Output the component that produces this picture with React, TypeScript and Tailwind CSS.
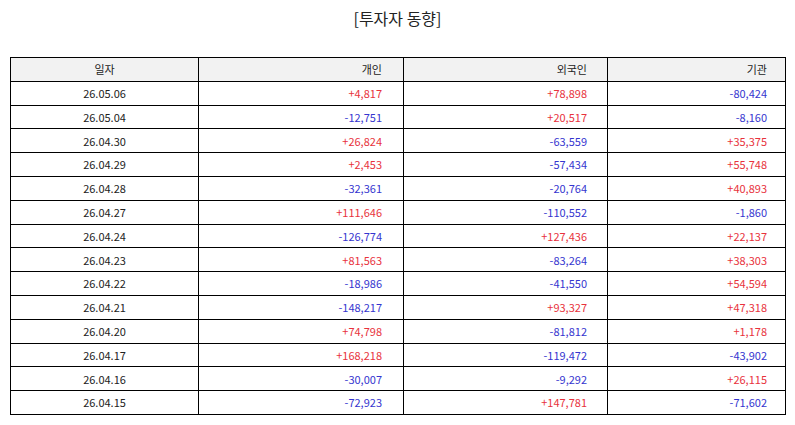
import React from 'react';

type Row = [string, string, string, string];

const rows: Row[] = [
  ['26.05.06', '+4,817', '+78,898', '-80,424'],
  ['26.05.04', '-12,751', '+20,517', '-8,160'],
  ['26.04.30', '+26,824', '-63,559', '+35,375'],
  ['26.04.29', '+2,453', '-57,434', '+55,748'],
  ['26.04.28', '-32,361', '-20,764', '+40,893'],
  ['26.04.27', '+111,646', '-110,552', '-1,860'],
  ['26.04.24', '-126,774', '+127,436', '+22,137'],
  ['26.04.23', '+81,563', '-83,264', '+38,303'],
  ['26.04.22', '-18,986', '-41,550', '+54,594'],
  ['26.04.21', '-148,217', '+93,327', '+47,318'],
  ['26.04.20', '+74,798', '-81,812', '+1,178'],
  ['26.04.17', '+168,218', '-119,472', '-43,902'],
  ['26.04.16', '-30,007', '-9,292', '+26,115'],
  ['26.04.15', '-72,923', '+147,781', '-71,602'],
];

const tone = (v: string) => (v.startsWith('+') ? 'text-[#e8323c]' : 'text-[#3535cf]');

const App: React.FC = () => {
  return (
    <div
      className="w-[795px] h-[425px] bg-white overflow-hidden"
      style={{ fontFamily: '"Noto Sans CJK KR", "Noto Sans", sans-serif' }}
    >
      <h1 className="h-[38px] pt-[5px] text-center text-[16px] leading-[26px] text-[#222]">[투자자 동향]</h1>

      <div className="pt-[19px] pl-[10px]">
        <table className="table-fixed border-collapse w-[775px] text-[11px] text-[#222]">
          <colgroup>
            <col className="w-[188px]" />
            <col className="w-[205px]" />
            <col className="w-[204px]" />
            <col className="w-[178px]" />
          </colgroup>
          <thead>
            <tr className="h-[23.8px] bg-[#f2f2f2]">
              <th className="border border-black font-normal text-center p-0">일자</th>
              <th className="border border-black font-normal text-right p-0 pr-[21px]">개인</th>
              <th className="border border-black font-normal text-right p-0 pr-[20px]">외국인</th>
              <th className="border border-black font-normal text-right p-0 pr-[18px]">기관</th>
            </tr>
          </thead>
          <tbody>
            {rows.map(([date, ind, frn, inst]) => (
              <tr key={date} className="h-[23.8px]">
                <td className="border border-black text-center p-0">{date}</td>
                <td className={`border border-black text-right p-0 pr-[21px] ${tone(ind)}`}>{ind}</td>
                <td className={`border border-black text-right p-0 pr-[20px] ${tone(frn)}`}>{frn}</td>
                <td className={`border border-black text-right p-0 pr-[18px] ${tone(inst)}`}>{inst}</td>
              </tr>
            ))}
          </tbody>
        </table>
      </div>
    </div>
  );
};

export default App;
